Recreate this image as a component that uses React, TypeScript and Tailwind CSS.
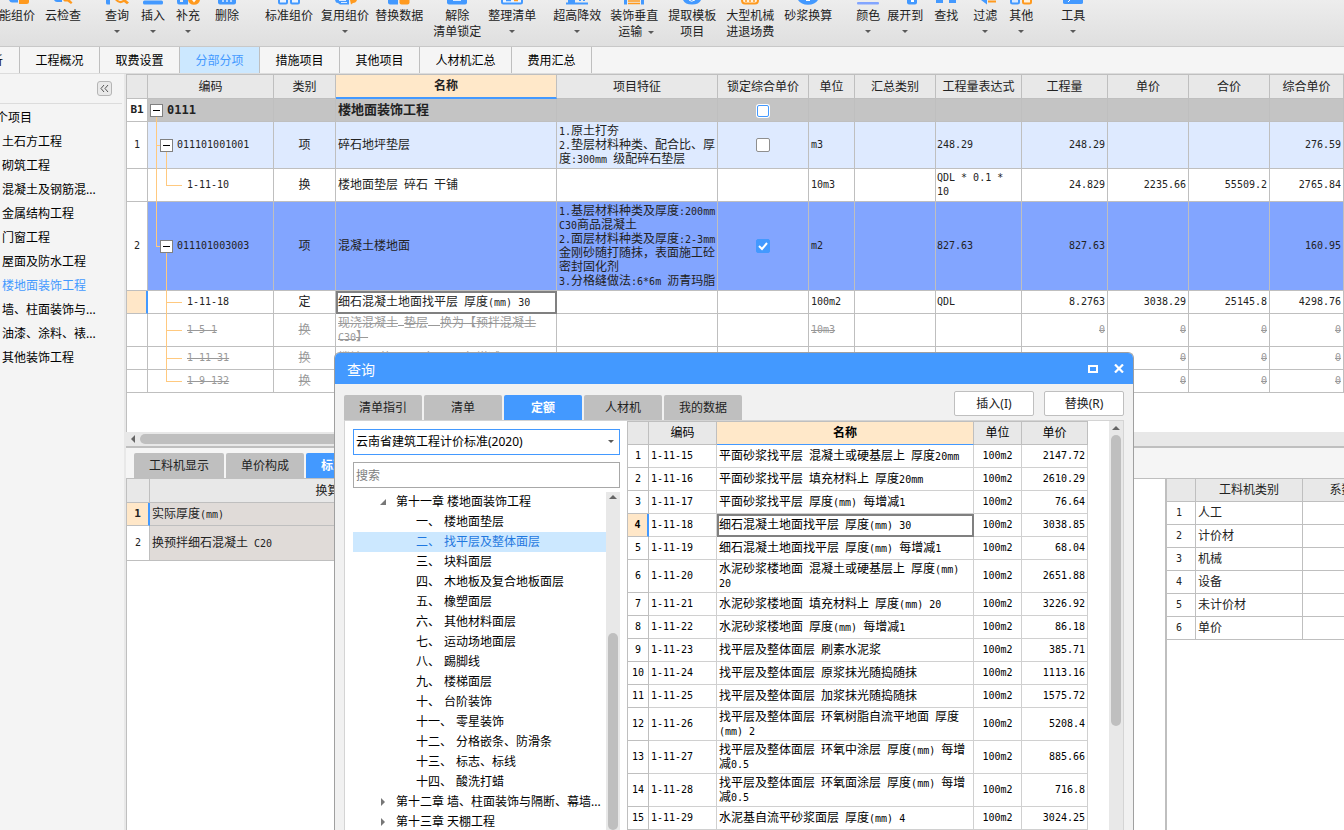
import React from "react";

const UI_FONT = "font-['Noto_Sans','Noto_Sans_CJK_SC',sans-serif]";
const GRID_FONT = "font-['DejaVu_Sans_Mono','Noto_Sans_CJK_SC',monospace]";

const BLUE = "#4399ff";
const ORANGE = "#ff9a1f";

interface Tool {
  label: string;
  second?: string;
  arrow?: "below" | "inline";
  gap: string;
  icon: React.ReactNode;
}

// Only the lower edge of each icon shows while the ribbon is scrolled up
const tools: Tool[] = [
  {
    label: "能组价",
    gap: "-ml-px",
    icon: (
      <>
        <path d="M4 0h5l4 0v2.5H7Q5 2.5 4 0z" fill={BLUE} />
        <path d="M14 0h10v1.500q0 2.500-2.500 2.500H14z" fill={ORANGE} />
      </>
    ),
  },
  {
    label: "云检查",
    gap: "ml-2.5",
    icon: (
      <>
        <path d="M3 0h8v2H6Q4 2 3 0z" fill={BLUE} />
        <path d="M12 0h7l2.500 2.500-1.500 1.500L16.500 1.500h-3z" fill={ORANGE} />
      </>
    ),
  },
  {
    label: "查询",
    arrow: "below",
    gap: "ml-6",
    icon: (
      <>
        <path d="M1 0h4v4.500H2.500Q1 4.500 1 3z" fill={BLUE} />
        <path d="M10 0h3q2 2 5 0h3l3 2.500-2 1.800L19 2q-5 3-9-2z" fill={ORANGE} />
      </>
    ),
  },
  { label: "插入", arrow: "below", gap: "ml-3", icon: <rect x="2" y="0.500" width="20" height="4" rx="1.500" fill={BLUE} /> },
  {
    label: "补充",
    arrow: "below",
    gap: "ml-[11px]",
    icon: (
      <>
        <path d="M1 0h3v2h3V0h5v4.500H3Q1 4.500 1 2z" fill={BLUE} />
        <path d="M12 0h12q-1 4.800-6 4.800T12 0z" fill={ORANGE} />
        <path d="M16 0h4l-2 2.500z" fill="#fff" />
      </>
    ),
  },
  {
    label: "删除",
    gap: "ml-[15px]",
    icon: (
      <>
        <path d="M3 0h18v2.500q0 2-2 2H5q-2 0-2-2z" fill={BLUE} />
        <path d="M8 0v2M12 0v2M16 0v2" stroke="#dbeaff" strokeWidth="1.500" />
      </>
    ),
  },
  {
    label: "标准组价",
    gap: "ml-[26px]",
    icon: <path d="M2 0v2.500q0 1 1 1h6q1 0 1-1V0M14 0v2.500q0 1 1 1h6q1 0 1-1V0" fill="#eef5ff" stroke={BLUE} strokeWidth="2" />,
  },
  {
    label: "复用组价",
    arrow: "below",
    gap: "ml-2",
    icon: (
      <>
        <path d="M2 0h14v4.500H7Q5 2.500 3 2.500z" fill={BLUE} />
        <path d="M6 .5h7M8 2.500h6" stroke="#dbeaff" />
        <path d="M17 0h7q-1 3-4 3l-2 1.500z" fill={ORANGE} />
      </>
    ),
  },
  {
    label: "替换数据",
    gap: "ml-1.5",
    icon: (
      <>
        <path d="M1 0h10v4.500H3Q1 4.500 1 2.500z" fill={BLUE} />
        <path d="M12.500 0h10v2.500q0 2-2 2h-6q-2 0-2-2z" fill={ORANGE} />
      </>
    ),
  },
  {
    label: "解除",
    second: "清单锁定",
    gap: "ml-2.5",
    icon: (
      <>
        <path d="M2 0h20v2.500q0 2-2 2H4q-2 0-2-2z" fill={BLUE} />
        <rect x="8" y="0" width="8" height="1" fill="#dbeaff" />
      </>
    ),
  },
  {
    label: "整理清单",
    arrow: "below",
    gap: "ml-[7px]",
    icon: (
      <>
        <path d="M2 0v2q0 1.500 1.500 1.500h17Q22 3.500 22 2V0" fill="#eef5ff" stroke={BLUE} strokeWidth="2" />
        <path d="M6 .5h5" stroke={BLUE} strokeWidth="1.500" />
        <path d="M14 .5h4" stroke={ORANGE} strokeWidth="1.500" />
      </>
    ),
  },
  {
    label: "超高降效",
    arrow: "below",
    gap: "ml-[17px]",
    icon: (
      <>
        <path d="M1 3.500h22" stroke={BLUE} strokeWidth="2" />
        <path d="M3 0h7v3H3z" fill={BLUE} />
        <path d="M15 0v1M19 0v1" stroke={BLUE} strokeWidth="2" />
      </>
    ),
  },
  {
    label: "装饰垂直",
    second: "运输",
    arrow: "inline",
    gap: "ml-[9px]",
    icon: (
      <>
        <path d="M2 0h3v4.500H2zM19 0h3v4.500h-3z" fill={BLUE} />
        <path d="M6 1h12M6 3.500h12" stroke={ORANGE} strokeWidth="1.500" />
      </>
    ),
  },
  {
    label: "提取模板",
    second: "项目",
    gap: "ml-2.5",
    icon: (
      <>
        <path d="M3 0h18q-2 4.500-9 4.500T3 0z" fill={BLUE} />
        <path d="M9 0q2 2.500 6 0" fill="none" stroke="#fff" />
      </>
    ),
  },
  {
    label: "大型机械",
    second: "进退场费",
    gap: "ml-2.5",
    icon: (
      <>
        <path d="M4 0q0 3.500 3 3.500h10q3 0 3-3.500" fill="#fff1dc" stroke={ORANGE} strokeWidth="2" />
        <path d="M8 0v2M12 0v2M16 0v2" stroke={ORANGE} strokeWidth="1.500" />
      </>
    ),
  },
  {
    label: "砂浆换算",
    gap: "ml-2.5",
    icon: (
      <>
        <path d="M2 0h20q-3 4.800-10 4.800T2 0z" fill={BLUE} />
        <path d="M10 0h4v1h-4z" fill="#fff" />
      </>
    ),
  },
  { label: "颜色", arrow: "below", gap: "ml-6", icon: <rect x="1" y="2" width="22" height="2.500" rx="1" fill="#82a5ff" /> },
  {
    label: "展开到",
    arrow: "below",
    gap: "ml-[7px]",
    icon: (
      <>
        <path d="M14 0h10v2.500q0 2-2 2h-6q-2 0-2-2z" fill={BLUE} />
        <path d="M18 0h3v2h-3z" fill="#fff" />
      </>
    ),
  },
  { label: "查找", gap: "ml-[11px]", icon: <path d="M2 0h7v3H2zM15 0h7v3h-7z" fill={BLUE} /> },
  {
    label: "过滤",
    arrow: "below",
    gap: "ml-[15px]",
    icon: (
      <>
        <path d="M8 0h6v4.500z" fill={BLUE} />
        <path d="M15 1.500h8" stroke={ORANGE} strokeWidth="2" />
      </>
    ),
  },
  {
    label: "其他",
    arrow: "below",
    gap: "ml-3",
    icon: (
      <>
        <path d="M2 0v2q0 1.500 1.500 1.500h5Q10 3.500 10 2V0" fill="#dbeaff" stroke={BLUE} strokeWidth="2" />
        <path d="M14 0v2q0 1.500 1.500 1.500h5Q22 3.500 22 2V0" fill="#fff1dc" stroke={ORANGE} strokeWidth="2" />
      </>
    ),
  },
  {
    label: "工具",
    arrow: "below",
    gap: "ml-7",
    icon: (
      <>
        <path d="M2 0h20v2.500q0 1.500-2 1.500H4Q2 4 2 2.500z" fill={BLUE} />
        <path d="M7 2l2-2" stroke="#fff" />
      </>
    ),
  },
];

const pageTabs = [
  { label: "工程概况", width: "w-20" },
  { label: "取费设置", width: "w-20" },
  { label: "分部分项", width: "w-20", active: true },
  { label: "措施项目", width: "w-20" },
  { label: "其他项目", width: "w-20" },
  { label: "人材机汇总", width: "w-[92px]" },
  { label: "费用汇总", width: "w-20" },
];

const sections = [
  "土石方工程",
  "砌筑工程",
  "混凝土及钢筋混...",
  "金属结构工程",
  "门窗工程",
  "屋面及防水工程",
  "楼地面装饰工程",
  "墙、柱面装饰与...",
  "油漆、涂料、裱...",
  "其他装饰工程",
];

interface BillRow {
  no: string;
  code: string;
  type: string;
  name: string;
  feature?: string;
  check?: "mixed" | "off" | "on";
  unit?: string;
  expr?: string;
  values: string[];
  height: string;
  kind: "group" | "item" | "selected" | "sub";
  current?: boolean;
  disabled?: boolean;
  last?: boolean;
  trunk?: "full" | "half";
}

const billRows: BillRow[] = [
  { no: "B1", code: "0111", type: "", name: "楼地面装饰工程", check: "mixed", values: ["", "", "", ""], height: "h-[23px]", kind: "group" },
  {
    no: "1",
    code: "011101001001",
    type: "项",
    name: "碎石地坪垫层",
    feature: "1.原土打夯\n2.垫层材料种类、配合比、厚\n度:300mm 级配碎石垫层",
    check: "off",
    unit: "m3",
    expr: "248.29",
    values: ["248.29", "", "", "276.59"],
    height: "h-[47px]",
    kind: "item",
    trunk: "full",
  },
  {
    no: "",
    code: "1-11-10",
    type: "换",
    name: "楼地面垫层 碎石 干铺",
    unit: "10m3",
    expr: "QDL * 0.1 *\n10",
    values: ["24.829", "2235.66", "55509.2", "2765.84"],
    height: "h-[33px]",
    kind: "sub",
    last: true,
    trunk: "full",
  },
  {
    no: "2",
    code: "011101003003",
    type: "项",
    name: "混凝土楼地面",
    feature:
      "1.基层材料种类及厚度:200mm\nC30商品混凝土\n2.面层材料种类及厚度:2-3mm\n金刚砂随打随抹，表面施工砼\n密封固化剂\n3.分格缝做法:6*6m 沥青玛脂",
    check: "on",
    unit: "m2",
    expr: "827.63",
    values: ["827.63", "", "", "160.95"],
    height: "h-[89px]",
    kind: "selected",
    trunk: "half",
  },
  {
    no: "",
    code: "1-11-18",
    type: "定",
    name: "细石混凝土地面找平层 厚度(mm) 30",
    unit: "100m2",
    expr: "QDL",
    values: ["8.2763", "3038.29", "25145.8", "4298.76"],
    height: "h-[23px]",
    kind: "sub",
    current: true,
  },
  {
    no: "",
    code: "1-5-1",
    type: "换",
    name: "现浇混凝土 垫层  换为【预拌混凝土\nC30】",
    unit: "10m3",
    values: ["0", "0", "0", "0"],
    height: "h-[33px]",
    kind: "sub",
    disabled: true,
  },
  { no: "", code: "1-11-31", type: "换", name: "楼地面 垫层 厚度(mm) 每增减", values: ["0", "0", "0", "0"], height: "h-[23px]", kind: "sub", disabled: true },
  { no: "", code: "1-9-132", type: "换", name: "", values: ["0", "0", "0", "0"], height: "h-[23px]", kind: "sub", disabled: true, last: true },
];

const billColumns = [
  { label: "", width: "w-[21px]" },
  { label: "编码", width: "w-[126px]" },
  { label: "类别", width: "w-[62px]" },
  { label: "名称", width: "w-[221px]" },
  { label: "项目特征", width: "w-[161px]" },
  { label: "锁定综合单价", width: "w-[91px]" },
  { label: "单位", width: "w-[46px]" },
  { label: "汇总类别", width: "w-[81px]" },
  { label: "工程量表达式", width: "w-[86px]" },
  { label: "工程量", width: "w-[86px]" },
  { label: "单价", width: "w-[81px]" },
  { label: "合价", width: "w-[81px]" },
  { label: "综合单价", width: "" },
];

const rowColors = {
  group: "bg-[#c4c4c4]",
  item: "bg-[#deeaff]",
  selected: "bg-[#82a5ff]",
  sub: "bg-white",
};

const chapters = [
  ["一、", "楼地面垫层"],
  ["二、", "找平层及整体面层"],
  ["三、", "块料面层"],
  ["四、", "木地板及复合地板面层"],
  ["五、", "橡塑面层"],
  ["六、", "其他材料面层"],
  ["七、", "运动场地面层"],
  ["八、", "踢脚线"],
  ["九、", "楼梯面层"],
  ["十、", "台阶装饰"],
  ["十一、", "零星装饰"],
  ["十二、", "分格嵌条、防滑条"],
  ["十三、", "标志、标线"],
  ["十四、", "酸洗打蜡"],
];

const quotas = [
  ["1-11-15", "平面砂浆找平层 混凝土或硬基层上 厚度20mm", "2147.72"],
  ["1-11-16", "平面砂浆找平层 填充材料上 厚度20mm", "2610.29"],
  ["1-11-17", "平面砂浆找平层 厚度(mm) 每增减1", "76.64"],
  ["1-11-18", "细石混凝土地面找平层 厚度(mm) 30", "3038.85"],
  ["1-11-19", "细石混凝土地面找平层 厚度(mm) 每增减1", "68.04"],
  ["1-11-20", "水泥砂浆楼地面 混凝土或硬基层上 厚度(mm)\n20", "2651.88"],
  ["1-11-21", "水泥砂浆楼地面 填充材料上 厚度(mm) 20", "3226.92"],
  ["1-11-22", "水泥砂浆楼地面 厚度(mm) 每增减1", "86.18"],
  ["1-11-23", "找平层及整体面层 刷素水泥浆", "385.71"],
  ["1-11-24", "找平层及整体面层 原浆抹光随捣随抹", "1113.16"],
  ["1-11-25", "找平层及整体面层 加浆抹光随捣随抹", "1575.72"],
  ["1-11-26", "找平层及整体面层 环氧树脂自流平地面 厚度\n(mm) 2", "5208.4"],
  ["1-11-27", "找平层及整体面层 环氧中涂层 厚度(mm) 每增\n减0.5", "885.66"],
  ["1-11-28", "找平层及整体面层 环氧面涂层 厚度(mm) 每增\n减0.5", "716.8"],
  ["1-11-29", "水泥基自流平砂浆面层 厚度(mm) 4", "3024.25"],
];

const resourceTypes = ["人工", "计价材", "机械", "设备", "未计价材", "单价"];

// Latin runs are set smaller so that two of them take the width of one Chinese character
const GridText = ({ text }: { text: string }) => (
  <span className="whitespace-pre">
    {text.split(/([\x20-\x7e]+)/).map((part, i) =>
      i % 2 ? (
        <span key={i} className="text-[10px] leading-none">
          {part}
        </span>
      ) : (
        part
      )
    )}
  </span>
);

const Caret = ({ className = "" }: { className?: string }) => (
  <svg className={className} width="6" height="3" viewBox="0 0 6 3" fill="#5a5a5a">
    <path d="M0 0h6L3 3z" />
  </svg>
);

const Toolbar = () => (
  <header className="flex h-[47px] shrink-0 overflow-hidden border-b border-[#c8c8c8] bg-linear-to-b from-[#ededed] to-[#dfdfdf] text-[#222]">
    {tools.map((tool) => (
      <button key={tool.label} className={`flex shrink-0 flex-col items-center whitespace-nowrap leading-4 ${tool.gap}`}>
        <svg className="-mx-3 mb-[3px]" width="24" height="5" viewBox="0 0 24 5">
          {tool.icon}
        </svg>
        <span>{tool.label}</span>
        {tool.second && (
          <span className={tool.arrow === "inline" ? "flex items-center gap-1.5 pl-1" : ""}>
            {tool.second}
            {tool.arrow === "inline" && <Caret />}
          </span>
        )}
        {tool.arrow === "below" && <Caret className="mt-1.5" />}
      </button>
    ))}
  </header>
);

const PageTabs = () => (
  <nav className="flex h-[27px] shrink-0 border-b border-[#dcdcdc] bg-[#f5f5f5] text-black">
    <button className="flex w-5 shrink-0 items-center justify-end overflow-hidden border-r border-[#bfbfbf] pr-4 pt-0.5">析</button>
    {pageTabs.map((tab) => (
      <button
        key={tab.label}
        className={`shrink-0 border-r border-[#bfbfbf] pt-0.5 ${tab.width} ${tab.active ? "bg-[#cce8ff] text-[#4399ff]" : ""}`}
      >
        {tab.label}
      </button>
    ))}
  </nav>
);

const Sidebar = () => (
  <aside className="w-[126px] shrink-0 overflow-hidden border-r-2 border-[#e8e8e8] bg-[#f4f4f4] text-black">
    <div className="mr-0.5 flex h-[30px] items-center justify-end border-b border-[#dcdcdc] pr-2.5">
      <button aria-label="收起" className="flex size-[15px] items-center justify-center rounded-[3px] border border-[#b5b5b5] bg-[#e9e9e9]">
        <svg width="9" height="7" viewBox="0 0 9 7" fill="none" stroke="#555">
          <path d="M4 0L1 3.500 4 7M8 0L5 3.500 8 7" />
        </svg>
      </button>
    </div>
    <ul className="whitespace-nowrap pt-0.5">
      <li className="-ml-1 h-6 leading-6">
        <a href="#all">个项目</a>
      </li>
      {sections.map((section) => (
        <li key={section} className="h-6 pl-0.5 leading-6">
          <a href="#section" className={section === "楼地面装饰工程" ? "text-[#4399ff]" : ""}>
            {section}
          </a>
        </li>
      ))}
    </ul>
  </aside>
);

const Toggle = () => (
  <button aria-label="折叠" className="relative flex size-[13px] shrink-0 items-center justify-center border border-[#808080] bg-white">
    <span className="h-px w-[7px] bg-black" />
  </button>
);

const CodeCell = ({ row }: { row: BillRow }) => {
  const line = "absolute bg-[#ffc97f]";
  return (
    <>
      {row.kind === "group" && <span className={`${line} -bottom-px left-2 top-1/2 w-px`} />}
      {row.trunk === "full" && <span className={`${line} -bottom-px left-2 top-0 w-px`} />}
      {row.trunk === "half" && <span className={`${line} bottom-1/2 left-2 top-0 w-px`} />}
      {row.kind !== "group" && row.kind !== "sub" && (
        <>
          <span className={`${line} left-2 top-1/2 h-px w-2`} />
          <span className={`${line} -bottom-px left-[18px] top-1/2 w-px`} />
        </>
      )}
      {row.kind === "sub" && (
        <>
          <span className={`${line} left-[18px] top-0 w-px ${row.last ? "bottom-1/2" : "-bottom-px"}`} />
          <span className={`${line} left-[18px] top-1/2 h-px w-4`} />
        </>
      )}
      <div className={`flex items-center gap-1 ${row.kind === "group" ? "pl-0.5 text-xs" : row.kind === "sub" ? "pl-[39px] text-[10px]" : "pl-3 text-[10px]"}`}>
        {row.kind !== "sub" && <Toggle />}
        <span>{row.code}</span>
      </div>
    </>
  );
};

const LockBox = ({ state, label }: { state: "mixed" | "off" | "on"; label: string }) => (
  <span className="relative inline-flex align-middle">
    <input
      type="checkbox"
      aria-label={label}
      defaultChecked={state === "on"}
      className={`appearance-none rounded-xs border bg-white checked:border-[#4399ff] checked:bg-[#4399ff] ${
        state === "mixed" ? "size-3 border-[#4399ff] bg-[#f2f2f2] ring-1 ring-white" : "size-3.5 border-[#8f8f8f]"
      }`}
    />
    {state === "on" && (
      <svg className="pointer-events-none absolute inset-0" width="14" height="14" viewBox="0 0 14 14" fill="none" stroke="#fff" strokeWidth="2">
        <path d="M3 7l3 3 5-6" />
      </svg>
    )}
  </span>
);

const BillTable = () => (
  <div className="overflow-hidden border-l border-t border-[#bfbfbf] pb-[39px]">
    <table className={`w-full table-fixed border-separate border-spacing-0 leading-[14px] text-[#222] ${GRID_FONT}`}>
      <thead>
        <tr className="h-6">
          {billColumns.map((col) => (
            <th
              key={col.label}
              className={`whitespace-nowrap border-r border-[#bfbfbf] p-0 ${col.width} ${
                col.label === "名称" ? "border-b-2 border-b-[#4399ff] bg-[#ffe8c9] font-bold" : "border-b bg-[#e8e8e8] font-normal"
              }`}
            >
              {col.label}
            </th>
          ))}
        </tr>
      </thead>
      <tbody>
        {billRows.map((row, i) => {
          const cell = `border-b border-r border-[#bfbfbf] py-0 ${rowColors[row.kind]}`;
          return (
            <tr
              key={row.code}
              className={`${row.height} ${row.kind === "group" ? "text-[13px] font-bold" : ""} ${row.disabled ? "text-[#999] line-through" : ""}`}
            >
              <td
                className={`border-b border-[#bfbfbf] p-0 text-center ${
                  row.current ? "border-r-2 border-r-[#4399ff] bg-[#ffe7c8]" : "border-r bg-white"
                } ${row.kind === "group" ? "text-[11px]" : "text-[10px]"}`}
              >
                {row.no}
              </td>
              <td className={`relative px-0 ${cell}`}>
                <CodeCell row={row} />
              </td>
              <td className={`px-0 text-center ${cell}`}>{row.type}</td>
              <td className={`px-0.5 ${cell} ${row.current ? "outline-2 -outline-offset-2 outline-[#808080]" : ""}`}>
                <GridText text={row.name} />
              </td>
              <td className={`px-0.5 ${cell}`}>{row.feature && <GridText text={row.feature} />}</td>
              <td className={`px-0 text-center ${cell}`}>{row.check && <LockBox state={row.check} label={`锁定综合单价 ${i}`} />}</td>
              <td className={`px-0.5 text-[10px] ${cell}`}>{row.unit}</td>
              <td className={cell} />
              <td className={`whitespace-pre px-px text-[10px] ${cell}`}>{row.expr}</td>
              {row.values.map((value, j) => (
                <td key={j} className={`px-0.5 text-right text-[10px] ${cell}`}>
                  {value}
                </td>
              ))}
            </tr>
          );
        })}
      </tbody>
    </table>
  </div>
);

const BottomPanel = () => (
  <section className="flex min-h-0 flex-1 flex-col">
    <div className="flex h-3.5 shrink-0 items-center gap-[5px] bg-[#e8e8e8] pl-[5px]">
      <svg width="4" height="8" viewBox="0 0 4 8" fill="#666">
        <path d="M4 0v8L0 4z" />
      </svg>
      <div className="h-2.5 w-3/4 rounded-full bg-[#bfbfbf]" />
    </div>
    <div className="flex h-8 shrink-0 items-end gap-0.5 border-t-2 border-[#bfbfbf] bg-[#f5f5f5] pl-2 text-[#222]">
      <button className="h-[25px] w-[90px] rounded-t-xs bg-[#bfbfbf]">工料机显示</button>
      <button className="h-[25px] w-[78px] rounded-t-xs bg-[#bfbfbf]">单价构成</button>
      <button className="h-[25px] w-[78px] rounded-t-xs bg-[#4399ff] font-bold text-white">标准换算</button>
    </div>
    <div className={`flex min-h-0 flex-1 border-t border-[#bfbfbf] leading-[14px] text-[#222] ${GRID_FONT}`}>
      <div className="min-w-0 flex-1 border-l border-[#bfbfbf]">
        <table className="w-[403px] table-fixed border-separate border-spacing-0">
          <thead>
            <tr className="h-6">
              <th className="w-[23px] border-b border-r border-[#bfbfbf] bg-[#e8e8e8] p-0" />
              <th className="border-b border-r border-[#bfbfbf] bg-[#e8e8e8] p-0 font-normal">换算列表</th>
            </tr>
          </thead>
          <tbody>
            <tr className="h-[23px]">
              <td className="border-b border-r-2 border-[#bfbfbf] border-r-[#4399ff] bg-[#ffe7c8] p-0 text-center text-[11px] font-bold">1</td>
              <td className="border-b border-r border-[#bfbfbf] bg-[#e0dbd8] px-0.5 py-0">
                <GridText text="实际厚度(mm)" />
              </td>
            </tr>
            <tr className="h-[35px]">
              <td className="border-b border-r border-[#bfbfbf] bg-white p-0 text-center text-[10px]">2</td>
              <td className="border-b border-r border-[#bfbfbf] bg-[#e0dbd8] px-0.5 py-0">
                <GridText text="换预拌细石混凝土 C20" />
              </td>
            </tr>
          </tbody>
        </table>
      </div>
      <div className="w-[179px] shrink-0 overflow-hidden border-l-2 border-[#bfbfbf]">
        <table className="w-[214px] table-fixed border-separate border-spacing-0">
          <thead>
            <tr className="h-[23px]">
              <th className="w-[29px] border-b border-r border-[#bfbfbf] bg-[#e8e8e8] p-0" />
              <th className="w-[107px] border-b border-r border-[#bfbfbf] bg-[#e8e8e8] p-0 font-normal">工料机类别</th>
              <th className="border-b border-r border-[#bfbfbf] bg-[#e8e8e8] p-0 font-normal">系数</th>
            </tr>
          </thead>
          <tbody>
            {resourceTypes.map((type, i) => (
              <tr key={type} className="h-[23px]">
                <td className="border-b border-r border-[#bfbfbf] p-0 pr-1 text-center text-[10px]">{i + 1}</td>
                <td className="border-b border-r border-[#bfbfbf] px-0.5 py-0">{type}</td>
                <td className="border-b border-r border-[#bfbfbf] p-0" />
              </tr>
            ))}
          </tbody>
        </table>
      </div>
    </div>
  </section>
);

const QuotaTree = () => (
  <div className="flex w-[282px] shrink-0 flex-col pl-2 pr-[7px] pt-2 text-black">
    <div className="relative">
      <select aria-label="定额库" className="block h-[26px] w-full appearance-none border border-[#4399ff] bg-white px-0.5">
        <option>云南省建筑工程计价标准(2020)</option>
      </select>
      <Caret className="pointer-events-none absolute right-1.5 top-[11px]" />
    </div>
    <input
      aria-label="搜索"
      placeholder="搜索"
      className="mt-[7px] h-[26px] w-full shrink-0 border border-[#a8a8a8] bg-white px-0.5 placeholder:text-[#808080]"
    />
    <div className="mt-1 flex min-h-0 flex-1">
      <ul className="min-w-0 flex-1 overflow-hidden whitespace-nowrap leading-5">
        <li className="flex h-5 items-center gap-2.5 pl-[27px]">
          <svg width="6" height="6" viewBox="0 0 6 6" fill="#777">
            <path d="M6 0v6H0z" />
          </svg>
          <span>第十一章 楼地面装饰工程</span>
        </li>
        {chapters.map(([no, title]) => (
          <li key={no} className={`flex h-5 gap-1 pl-[63px] ${no === "二、" ? "bg-[#cce8ff] text-[#1f78e0]" : ""}`}>
            <span>{no}</span>
            <span>{title}</span>
          </li>
        ))}
        {["第十二章 墙、柱面装饰与隔断、幕墙...", "第十三章 天棚工程"].map((title) => (
          <li key={title} className="flex h-5 items-center gap-2.5 pl-[27px]">
            <svg className="shrink-0" width="6" height="8" viewBox="0 0 6 8" fill="#777">
              <path d="M1 0v8l4-4z" />
            </svg>
            <span>{title}</span>
          </li>
        ))}
      </ul>
      <div className="flex w-3.5 shrink-0 flex-col items-center bg-[#e8e8e8] pt-[3px]">
        <svg width="8" height="4" viewBox="0 0 8 4" fill="#666">
          <path d="M0 4h8L4 0z" />
        </svg>
        <div className="mt-[134px] w-2.5 flex-1 rounded-full bg-[#bfbfbf]" />
      </div>
    </div>
  </div>
);

const QuotaTable = () => (
  <div className="min-w-0 flex-1 overflow-hidden">
    <table className={`w-[461px] table-fixed border-separate border-spacing-0 border-l border-[#bfbfbf] leading-[14px] text-black ${GRID_FONT}`}>
      <thead>
        <tr className="h-6">
          <th className="w-[21px] border-b border-r border-t border-[#bfbfbf] bg-[#e8e8e8] p-0" />
          <th className="w-[68px] border-b border-r border-t border-[#bfbfbf] bg-[#e8e8e8] p-0 font-normal">编码</th>
          <th className="w-[257px] border-b border-r border-t border-[#bfbfbf] border-b-[#4399ff] bg-[#ffe8c9] p-0 font-bold">名称</th>
          <th className="w-12 border-b border-r border-t border-[#bfbfbf] bg-[#e8e8e8] p-0 font-normal">单位</th>
          <th className="border-b border-r border-t border-[#bfbfbf] bg-[#e8e8e8] p-0 font-normal">单价</th>
        </tr>
      </thead>
      <tbody>
        {quotas.map(([code, name, price], i) => {
          const current = code === "1-11-18";
          const cell = "border-b border-r border-[#d0d0d0] py-0";
          return (
            <tr key={code} className={name.includes("\n") ? "h-[33px]" : "h-[23px]"}>
              <td
                className={`border-b border-[#bfbfbf] p-0 text-center text-[10px] ${
                  current ? "border-r-2 border-r-[#4399ff] bg-[#ffe7c8] font-bold" : "border-r"
                }`}
              >
                {i + 1}
              </td>
              <td className={`px-0.5 text-[10px] ${cell}`}>{code}</td>
              <td className={`px-0.5 ${cell} ${current ? "outline-2 -outline-offset-2 outline-[#808080]" : ""}`}>
                <GridText text={name} />
              </td>
              <td className={`px-0 text-center text-[10px] ${cell}`}>100m2</td>
              <td className={`px-0.5 text-right text-[10px] ${cell}`}>{price}</td>
            </tr>
          );
        })}
      </tbody>
    </table>
  </div>
);

const QueryDialog = () => (
  <div
    role="dialog"
    aria-label="查询"
    className="absolute bottom-0 left-[334px] top-[352px] flex w-[800px] flex-col overflow-hidden rounded-t-md border border-b-0 border-[#a0a0a0] bg-[#f1f1f1]"
  >
    <div className="flex h-[31px] shrink-0 items-center bg-[#4399ff] pl-3 pr-[9px] text-sm text-white">
      <h2 className="flex-1 pt-0.5">查询</h2>
      <button aria-label="最大化" className="mr-4">
        <svg width="10" height="8" viewBox="0 0 10 8" fill="none" stroke="#fff" strokeWidth="2">
          <path d="M1 1h8v6H1z" />
        </svg>
      </button>
      <button aria-label="关闭">
        <svg width="10" height="9" viewBox="0 0 10 9" fill="none" stroke="#fff" strokeWidth="2.200">
          <path d="M1 0.500l8 8M9 0.500l-8 8" />
        </svg>
      </button>
    </div>
    <div className="flex h-9 shrink-0 items-end gap-0.5 px-[9px] text-[#222]">
      <button className="h-[25px] w-[78px] rounded-t-xs bg-[#bfbfbf]">清单指引</button>
      <button className="h-[25px] w-[78px] rounded-t-xs bg-[#bfbfbf]">清单</button>
      <button className="h-[25px] w-[78px] rounded-t-xs bg-[#4399ff] font-bold text-white">定额</button>
      <button className="h-[25px] w-[78px] rounded-t-xs bg-[#bfbfbf]">人材机</button>
      <button className="h-[25px] w-[78px] rounded-t-xs bg-[#bfbfbf]">我的数据</button>
      <div className="mb-1 ml-auto flex gap-2.5">
        <button className="h-[25px] w-20 rounded-xs border border-[#bfbfbf] bg-white">插入(I)</button>
        <button className="h-[25px] w-20 rounded-xs border border-[#bfbfbf] bg-white">替换(R)</button>
      </div>
    </div>
    <div className="mx-[9px] flex min-h-0 flex-1 border-x border-t border-[#d4d4d4] bg-white">
      <QuotaTree />
      <QuotaTable />
      <div className="flex w-3.5 shrink-0 flex-col items-center bg-[#e8e8e8] pt-[5px]">
        <svg width="8" height="4" viewBox="0 0 8 4" fill="#666">
          <path d="M0 4h8L4 0z" />
        </svg>
        <div className="mt-[5px] h-[291px] w-2.5 rounded-full bg-[#bfbfbf]" />
      </div>
    </div>
  </div>
);

const App: React.FC = () => {
  return (
    <div className={`relative flex h-screen flex-col overflow-hidden bg-white text-xs ${UI_FONT}`}>
      <Toolbar />
      <PageTabs />
      <div className="flex min-h-0 flex-1">
        <Sidebar />
        <main className="flex min-w-0 flex-1 flex-col">
          <BillTable />
          <BottomPanel />
        </main>
      </div>
      <QueryDialog />
    </div>
  );
};

export default App;
